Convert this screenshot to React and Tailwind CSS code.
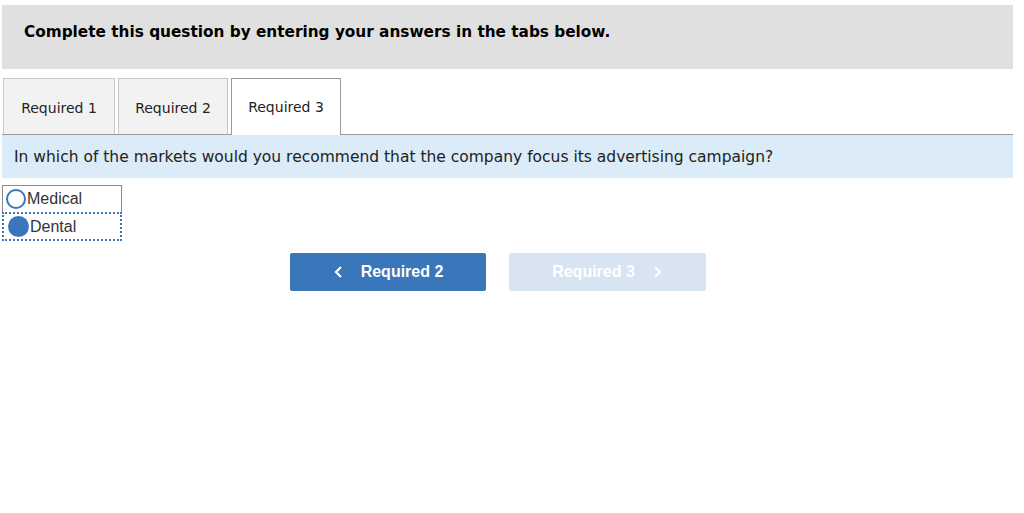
import React from "react";

const verdana = { fontFamily: '"DejaVu Sans", Verdana, sans-serif' };

export default function App() {
  return (
    <div className="w-[1024px] h-[513px] bg-white pt-[5px] pl-[2px] pr-[11px]">
      <div className="h-[64px] bg-[#e0e0e0] flex items-start pl-[22px] pt-[18px]">
        <span className="text-[15.3px] leading-[18px] font-bold text-black" style={verdana}>
          Complete this question by entering your answers in the tabs below.
        </span>
      </div>
      <div className="mt-[9px] flex items-end gap-[3px] pl-[1px] border-b border-[#9a9a9a] h-[57px]">
        {["Required 1", "Required 2"].map((t) => (
          <div
            key={t}
            className="h-[56px] bg-[#f2f2f2] border border-b-0 border-[#c8c8c8] flex items-center justify-center pt-[3px] text-[14px] text-[#222]"
            style={{ ...verdana, width: t === "Required 1" ? 112 : 110 }}
          >
            {t}
          </div>
        ))}
        <div
          className="h-[57px] w-[110px] bg-white border border-b-0 border-[#9a9a9a] flex items-center justify-center pt-[1px] text-[14px] text-[#222] mb-[-1px]"
          style={verdana}
        >
          Required 3
        </div>
      </div>
      <div className="h-[43px] bg-[#dbebf8] flex items-center pl-[12px] pt-[3px]">
        <span className="text-[15.5px] text-[#222]" style={verdana}>
          In which of the markets would you recommend that the company focus its advertising campaign?
        </span>
      </div>
      <div className="mt-[7px] w-[120px] text-[16px] text-[#333]" style={{ fontFamily: '"Liberation Sans", Arial, sans-serif' }}>
        <div className="h-[27px] border border-b-0 border-[#8a8a8a] flex items-center pl-[3px] gap-[1px]">
          <span className="w-[20px] h-[20px] rounded-full border-[2.5px] border-[#3a76bb] bg-white" />
          <span>Medical</span>
        </div>
        <div className="h-[29px] border-2 border-dotted border-[#3a76bb] flex items-center pl-[4px] gap-[1px]">
          <span className="w-[21px] h-[21px] rounded-full bg-[#3a76bb]" />
          <span>Dental</span>
        </div>
      </div>
      <div className="mt-[12px] flex justify-center gap-[23px] pr-[20px]" style={{ fontFamily: '"Liberation Sans", Arial, sans-serif' }}>
        <button className="w-[196px] h-[38px] rounded-[2px] bg-[#3a76ba] text-white font-bold text-[16px] flex items-center justify-center gap-[18px] pl-[2px]">
          <svg width="9" height="14" viewBox="0 0 9 14" fill="none" stroke="white" strokeWidth="2.2">
            <path d="M7 2 L2 7 L7 12" />
          </svg>
          <span>Required 2</span>
        </button>
        <button className="w-[197px] h-[38px] rounded-[2px] bg-[#d8e4f2] text-white font-bold text-[16px] flex items-center justify-center gap-[18px]">
          <span>Required 3</span>
          <svg width="9" height="14" viewBox="0 0 9 14" fill="none" stroke="white" strokeWidth="2.2">
            <path d="M2 2 L7 7 L2 12" />
          </svg>
        </button>
      </div>
    </div>
  );
}
